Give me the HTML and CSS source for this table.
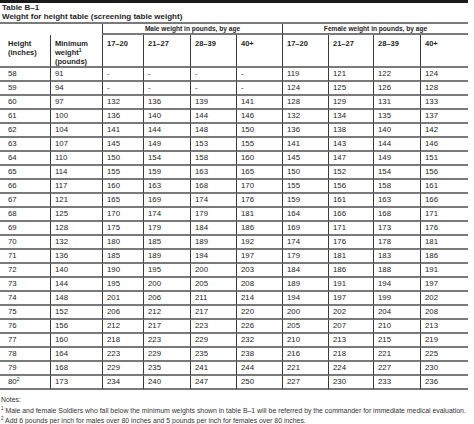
FILE: index.html
```html
<!DOCTYPE html>
<html>
<head>
<meta charset="utf-8">
<link rel="stylesheet" href="styles.css">
</head>
<body>
<div class="page">
  <div class="topbar"></div>
  <div class="title">Table B–1</div>
  <div class="title">Weight for height table (screening table weight)</div>
  <table class="wt">
    <colgroup>
      <col style="width:50px"><col style="width:52px"><col style="width:41px"><col style="width:47px"><col style="width:46px"><col style="width:46px"><col style="width:46px"><col style="width:45px"><col style="width:47px"><col style="width:48px">
    </colgroup>
    <thead>
      <tr class="group">
        <th colspan="2" class="blank"></th>
        <th colspan="4" class="grp">Male weight in pounds, by age</th>
        <th colspan="4" class="grp">Female weight in pounds, by age</th>
      </tr>
      <tr class="sub">
        <th class="first">Height<br>(inches)</th>
        <th>Minimum<br>weight<sup>1</sup><br>(pounds)</th>
        <th>17–20</th><th>21–27</th><th>28–39</th><th>40+</th>
        <th>17–20</th><th>21–27</th><th>28–39</th><th>40+</th>
      </tr>
    </thead>
    <tbody id="rows"></tbody>
  </table>
  <div class="notes">
    <div>Notes:</div>
    <div><sup>1</sup> Male and female Soldiers who fall below the minimum weights shown in table B–1 will be referred by the commander for immediate medical evaluation.</div>
    <div><sup>2</sup> Add 6 pounds per inch for males over 80 inches and 5 pounds per inch for females over 80 inches.</div>
  </div>
</div>
<script src="app.js"></script>
</body>
</html>
```
FILE: app.js
```js
var data = [
["58","91","-","-","-","-","119","121","122","124"],
["59","94","-","-","-","-","124","125","126","128"],
["60","97","132","136","139","141","128","129","131","133"],
["61","100","136","140","144","146","132","134","135","137"],
["62","104","141","144","148","150","136","138","140","142"],
["63","107","145","149","153","155","141","143","144","146"],
["64","110","150","154","158","160","145","147","149","151"],
["65","114","155","159","163","165","150","152","154","156"],
["66","117","160","163","168","170","155","156","158","161"],
["67","121","165","169","174","176","159","161","163","166"],
["68","125","170","174","179","181","164","166","168","171"],
["69","128","175","179","184","186","169","171","173","176"],
["70","132","180","185","189","192","174","176","178","181"],
["71","136","185","189","194","197","179","181","183","186"],
["72","140","190","195","200","203","184","186","188","191"],
["73","144","195","200","205","208","189","191","194","197"],
["74","148","201","206","211","214","194","197","199","202"],
["75","152","206","212","217","220","200","202","204","208"],
["76","156","212","217","223","226","205","207","210","213"],
["77","160","218","223","229","232","210","213","215","219"],
["78","164","223","229","235","238","216","218","221","225"],
["79","168","229","235","241","244","221","224","227","230"],
["80<sup>2</sup>","173","234","240","247","250","227","230","233","236"]
];
var tb = document.getElementById("rows");
var html = "";
data.forEach(function (r) {
  html += "<tr>";
  r.forEach(function (c, i) {
    html += "<td" + (i === 0 ? ' class="first"' : "") + ">" + c + "</td>";
  });
  html += "</tr>";
});
tb.innerHTML = html;
```
FILE: styles.css
```css
html, body {
  margin: 0;
  padding: 0;
  background: #fff;
}
.page {
  width: 468px;
  font-family: "Liberation Sans", Arial, sans-serif;
  color: #1e1e1e;
}
.topbar {
  height: 3px;
  background: #1a1a1a;
}
.title {
  font-weight: bold;
  font-size: 8px;
  line-height: 9px;
  padding-left: 2px;
}
.title:first-of-type {
  padding-top: 1px;
}
.wt {
  border-collapse: separate;
  border-spacing: 0;
  table-layout: fixed;
  width: 468px;
  margin-top: 1px;
  border-top: 2px solid #7a7a7a;
}
.wt th, .wt td {
  text-align: left;
  vertical-align: top;
  padding: 0 0 0 4px;
  border-left: 1px solid #3a3a3a;
  overflow: hidden;
}
.wt th.first, .wt td.first {
  border-left: none;
  padding-left: 8px;
}
.group th {
  height: 9px;
  font-size: 6.6px;
  line-height: 9px;
  font-weight: bold;
  text-align: center;
  border-bottom: 2px solid #7a7a7a;
  padding: 0;
}
.group th.blank {
  border-left: none;
  border-bottom: none;
}
.sub th {
  height: 26px;
  font-size: 7.5px;
  line-height: 9px;
  font-weight: bold;
  padding-top: 4px;
  border-bottom: 2px solid #7a7a7a;
}
.sub th sup, .wt td sup {
  font-size: 5px;
  line-height: 0;
  vertical-align: 3px;
}
.wt td {
  height: 12px;
  font-size: 7.8px;
  line-height: 12px;
  border-bottom: 2px solid #7a7a7a;
}
.notes {
  margin-top: 5px;
  font-size: 6.9px;
  line-height: 10.5px;
  color: #333;
  padding-left: 1px;
}
.notes sup {
  font-size: 4.5px;
  line-height: 0;
  vertical-align: 3px;
}
```
